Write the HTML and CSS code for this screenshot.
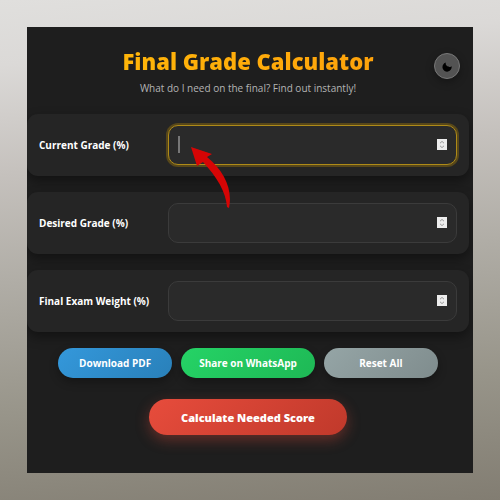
FILE: index.html
```
<!DOCTYPE html>
<html lang="en">
  <head>
    <title>Final Grade Calculator</title>
    <meta charset="UTF-8">
    <meta name="viewport" content="width=device-width, initial-scale=1">
    <link rel="stylesheet" href="styles.css">
  </head>
  <body>
    <main class="calculator">
      <header class="header">
        <h1>Final Grade Calculator</h1>
        <p>What do I need on the final? Find out instantly!</p>
        <button type="button" class="theme-toggle" aria-label="Toggle theme">
          <svg viewBox="0 0 10 10" width="10" height="10"><path d="M3.8 0.6A4.6 4.6 0 1 0 9.6 4.2A2.2 2.2 0 0 1 6.6 4.4A3 3 0 0 1 3.8 0.6Z"/></svg>
        </button>
      </header>
      <form class="grades">
        <div class="row">
          <label for="current">Current Grade (%)</label>
          <div class="field active">
            <input type="number" id="current">
            <span class="caret"></span>
            <svg class="spinner" viewBox="0 0 10 11"><path d="M3 4.2L5 2.4L7 4.2M3 6.8L5 8.6L7 6.8"/></svg>
            <svg class="arrow" viewBox="0 0 40 62"><path d="M0 0L21 7L16 10C33 24 42 42 38 61L36 60C35 45 26 30 12 15L6 19Z"/></svg>
          </div>
        </div>
        <div class="row">
          <label for="desired">Desired Grade (%)</label>
          <div class="field">
            <input type="number" id="desired">
            <svg class="spinner" viewBox="0 0 10 11"><path d="M3 4.2L5 2.4L7 4.2M3 6.8L5 8.6L7 6.8"/></svg>
          </div>
        </div>
        <div class="row">
          <label for="weight">Final Exam Weight (%)</label>
          <div class="field">
            <input type="number" id="weight">
            <svg class="spinner" viewBox="0 0 10 11"><path d="M3 4.2L5 2.4L7 4.2M3 6.8L5 8.6L7 6.8"/></svg>
          </div>
        </div>
        <div class="actions">
          <button type="button" class="pdf">Download PDF</button>
          <button type="button" class="whatsapp">Share on WhatsApp</button>
          <button type="reset" class="reset">Reset All</button>
        </div>
        <button type="submit" class="calculate">Calculate Needed Score</button>
      </form>
    </main>
  </body>
</html>
```

FILE: styles.css
```
* {
  box-sizing: border-box;
}
body {
  margin: 0;
  padding: 27px;
  min-height: 100vh;
  background: linear-gradient(175deg, #e0dfdd 0%, #dbd9d7 12%, #c5c1bd 32%, #b0ada6 52%, #98958a 76%, #827d72 100%);
  font-family: 'Open Sans', 'Noto Sans', sans-serif;
  font-size: 10px;
  color: #fff;
}
.calculator {
  overflow: hidden;
  padding: 19px 4px 38px 0;
  background: #1e1e1e;
}
.header {
  position: relative;
  padding-bottom: 18px;
  text-align: center;
}
h1 {
  margin: 0;
  background: linear-gradient(90deg, #ffbc08, #ff9c0c);
  -webkit-background-clip: text;
  background-clip: text;
  color: transparent;
  font-size: 22px;
  font-weight: 800;
  line-height: 30px;
}
.header p {
  margin: 5px 0 0;
  color: #b4b4b4;
  font-size: 10px;
  line-height: 15px;
}
.theme-toggle {
  position: absolute;
  top: 7px;
  right: 9px;
  display: flex;
  align-items: center;
  justify-content: center;
  width: 26px;
  height: 26px;
  padding: 2px 0 0;
  border: 1px solid #787878;
  border-radius: 50%;
  background: #535353;
  box-shadow: 0 3px 8px rgba(0,0,0,0.3);
}
.grades {
  display: flex;
  flex-direction: column;
  gap: 16px;
}
.row {
  display: flex;
  align-items: center;
  padding: 11px 12px;
  border-radius: 11px;
  background: #252525;
  box-shadow: 0 5px 12px rgba(0,0,0,0.4);
}
.row label {
  flex: 0 0 129px;
  font-weight: 700;
}
.field {
  position: relative;
  flex: 1;
}
.field input {
  display: block;
  width: 100%;
  height: 40px;
  padding: 0 30px 0 10px;
  border: 1px solid #3b3b3b;
  border-radius: 10px;
  outline: none;
  background: #2a2a2a;
  color: #fff;
  font: inherit;
  -moz-appearance: textfield;
  appearance: textfield;
}
.field input::-webkit-inner-spin-button {
  -webkit-appearance: none;
}
.field.active input {
  border-color: #ae8a18;
  box-shadow: 0 0 0 2px #57471a;
}
.spinner {
  position: absolute;
  top: 14px;
  right: 10px;
  width: 10px;
  height: 11px;
  background: #ededed;
  fill: none;
  stroke: #999;
}
.caret {
  position: absolute;
  top: 11px;
  left: 10px;
  width: 2px;
  height: 17px;
  background: #777;
}
.arrow {
  position: absolute;
  z-index: 1;
  top: 22px;
  left: 23px;
  width: 40px;
  height: 62px;
  fill: #d60505;
}
.actions {
  display: flex;
  justify-content: center;
  gap: 9px;
}
.actions button, .calculate {
  border: none;
  border-radius: 18px;
  color: #fff;
  font-family: inherit;
}
.actions button {
  min-width: 114px;
  height: 30px;
  padding: 0 18px;
  font-size: 10px;
  font-weight: 700;
  box-shadow: 0 4px 10px rgba(0,0,0,0.3);
}
.actions .pdf {
  background: linear-gradient(135deg, #3498db, #2980b9);
}
.actions .whatsapp {
  background: linear-gradient(135deg, #25d366, #1eb855);
}
.actions .reset {
  background: linear-gradient(135deg, #95a5a6, #7f8c8d);
}
.calculate {
  align-self: center;
  height: 36px;
  margin-top: 5px;
  padding: 0 32px;
  background: linear-gradient(135deg, #e74c3c, #c0392b);
  box-shadow: 0 5px 14px rgba(231,76,60,0.35);
  font-size: 11px;
  font-weight: 800;
}
```
